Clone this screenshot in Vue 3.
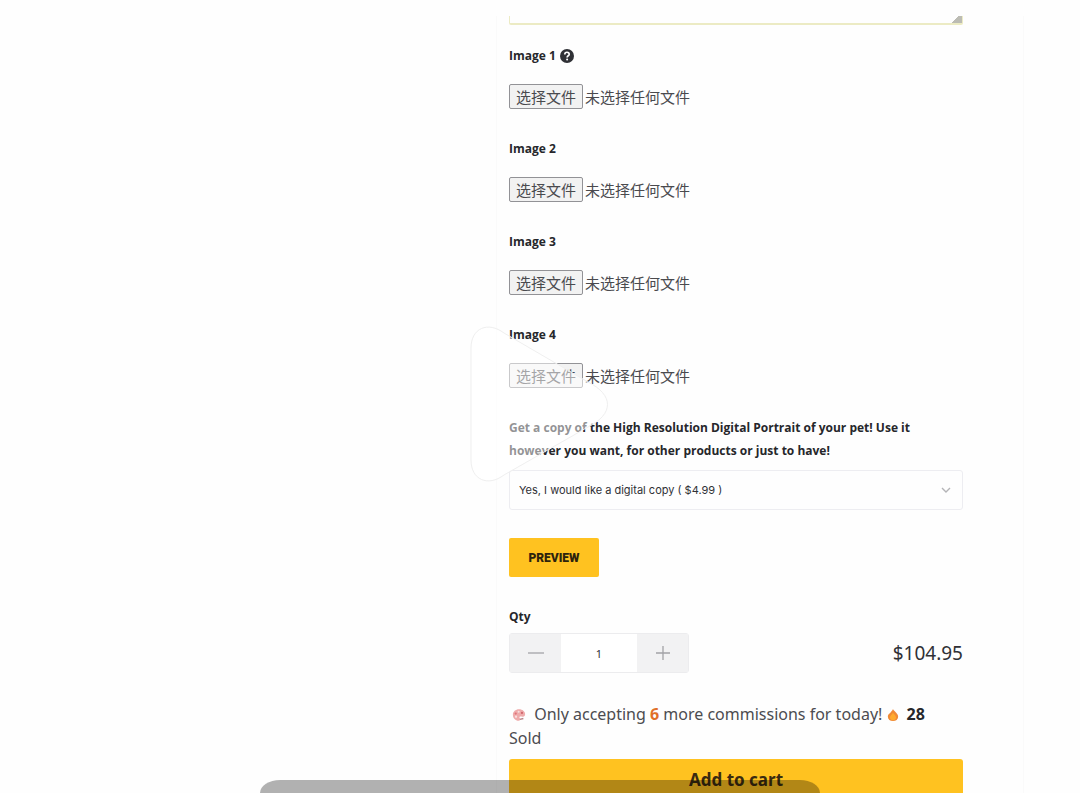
<script setup>
import { ref } from 'vue'

const slots = [
  { id: 'image-1', label: 'Image 1', help: true },
  { id: 'image-2', label: 'Image 2', help: false },
  { id: 'image-3', label: 'Image 3', help: false },
  { id: 'image-4', label: 'Image 4', help: false },
]
const files = ref({})
const quantity = ref(1)

function openPicker(id) {
  document.getElementById(id).click()
}
function onPick(id, event) {
  files.value[id] = event.target.files[0]?.name
}
</script>

<template>
  <main class="page">
    <form class="product" @submit.prevent>
      <textarea class="notes" aria-label="Notes"></textarea>

      <div v-for="slot in slots" :key="slot.id" class="upload">
        <div class="heading">
          <label class="label" :for="slot.id">{{ slot.label }}</label>
          <svg v-if="slot.help" class="help" viewBox="0 0 14 14" aria-hidden="true">
            <circle cx="7" cy="7" r="7" fill="#303136" />
            <path d="M4.8 5.4C4.8 2.5 9.2 2.6 9.2 5.2C9.2 6.8 7.1 6.7 7.1 8.5" fill="none" stroke="#fff" stroke-width="1.7" />
            <circle cx="7.1" cy="10.6" r="1" fill="#fff" />
          </svg>
        </div>
        <div class="picker">
          <input :id="slot.id" class="native" type="file" tabindex="-1" @change="onPick(slot.id, $event)" />
          <button class="choose" type="button" @click="openPicker(slot.id)">选择文件</button>
          <span>{{ files[slot.id] || '未选择任何文件' }}</span>
        </div>
      </div>

      <label class="label copy-label" for="copy">Get a copy of the High Resolution Digital Portrait of your pet! Use it however you want, for other products or just to have!</label>
      <div class="select-wrap">
        <select id="copy" class="select">
          <option>Yes, I would like a digital copy ( $4.99 )</option>
        </select>
        <svg class="chevron" viewBox="0 0 10 6" aria-hidden="true">
          <path d="M1 1L5 5L9 1" fill="none" stroke="#b4b4b7" stroke-width="1.4" />
        </svg>
      </div>

      <button class="preview" type="button">PREVIEW</button>

      <label class="label qty-label" for="qty">Qty</label>
      <div class="buy-row">
        <div class="stepper">
          <button class="step" type="button" aria-label="Decrease" @click="quantity = Math.max(1, quantity - 1)">
            <svg class="sign" viewBox="0 0 18 18"><path d="M1 9H17" stroke="#a3a3a7" stroke-width="1.3" /></svg>
          </button>
          <input id="qty" v-model.number="quantity" class="qty" type="text" inputmode="numeric" />
          <button class="step" type="button" aria-label="Increase" @click="quantity++">
            <svg class="sign" viewBox="0 0 18 18"><path d="M2 9H16M9 2V16" stroke="#a3a3a7" stroke-width="1.3" /></svg>
          </button>
        </div>
        <span class="price">$104.95</span>
      </div>

      <p class="stock">
        <svg class="emoji palette" viewBox="0 0 16 16" aria-hidden="true">
          <path d="M8 1.5C4 1.5 1 4.3 1 7.6C1 11.500 4 14.500 7.5 14.5C9.6 14.5 9.6 13 8.8 11.8C8 10.3 9 9.5 10.3 9.8C12.5 10.3 15 9.6 15 7C15 4 12 1.5 8 1.5Z" fill="#efabab" />
          <circle cx="4.2" cy="6.3" r="1.3" fill="#e0747a" />
          <circle cx="7.6" cy="4.3" r="1.2" fill="#f7dede" />
          <circle cx="11.4" cy="5.6" r="1.3" fill="#d0666d" />
          <circle cx="4.6" cy="10" r="1.3" fill="#f8dfdf" />
          <path d="M9 13L13 12" stroke="#b98488" stroke-width="1.5" />
        </svg>
        Only accepting <strong class="left">6</strong> more commissions for today!
        <svg class="emoji flame" viewBox="0 0 14 16" aria-hidden="true">
          <path d="M7 1C7.5 3.5 13 5.5 13 10C13 13.3 10.4 15 7 15C3.6 15 1 13.3 1 10C1 7 4 6 5 4C5.8 3.2 6.5 2.5 7 1Z" fill="#f08a35" />
          <path d="M7 5.5C7.5 7 10.5 8.5 10.5 11C10.5 13 9 14 7 14C5 14 3.5 13 3.5 11C3.5 9 6 7.5 7 5.5Z" fill="#ffaa2e" />
        </svg>
        <strong class="sold">28</strong> Sold
      </p>

      <button class="cart" type="submit">Add to cart</button>
    </form>

    <svg class="play" viewBox="0 0 140 160" aria-hidden="true">
      <path d="M1 24C1 4 18 -3 34 9L118 58C144 71 144 90 118 103L34 151C18 163 1 156 1 136Z" fill="#fff" fill-opacity="0.5" stroke="#efefef" />
    </svg>
    <div class="control-bar"></div>
  </main>
</template>

<style>
body {
  margin: 0;
  background: #fefefe;
}
</style>

<style scoped>
.page {
  position: relative;
  box-sizing: border-box;
  height: 100vh;
  overflow: hidden;
  display: grid;
  grid-template-columns: 496fr 528fr 56fr;
  padding-top: 16px;
  background: #fefefe;
  color: #303136;
  font-family: "Noto Sans", "Noto Sans CJK SC", sans-serif;
}
.product {
  grid-column: 2;
  display: flex;
  flex-direction: column;
  align-items: flex-start;
  padding: 0 60px 0 12px;
  border-left: 1px solid #fafafa;
  border-right: 1px solid #fafafa;
}
.notes {
  box-sizing: border-box;
  flex: none;
  width: 100%;
  height: 9px;
  padding: 0;
  border: 1px solid #ecebc4;
  border-top: 0;
  border-bottom-width: 2px;
  border-radius: 0 0 2px 2px;
  background: #fefefe;
  outline: 0;
  margin-bottom: 20px;
}
.notes::-webkit-resizer {
  background: linear-gradient(135deg, transparent 65%, #bcbcb4 65%);
}
button,
input,
select {
  font-family: inherit;
  color: inherit;
}
.upload {
  height: 93px;
}
.heading {
  display: flex;
  align-items: center;
  gap: 4px;
  height: 22px;
}
.label {
  font-family: "Open Sans", "Noto Sans", sans-serif;
  font-size: 12px;
  font-weight: 700;
  line-height: 22px;
  color: #26272b;
}
.help {
  width: 14px;
  height: 14px;
}
.picker {
  position: relative;
  display: flex;
  align-items: center;
  gap: 2px;
  margin-top: 17px;
  font-family: "Noto Sans CJK SC", sans-serif;
  font-size: 15px;
  line-height: 24px;
  color: #4a4a4e;
}
.native {
  position: absolute;
  width: 1px;
  height: 1px;
  opacity: 0;
  pointer-events: none;
}
.choose {
  box-sizing: border-box;
  height: 25px;
  padding: 0 6px;
  border: 1px solid #929296;
  border-radius: 2px;
  background: #f2f2f2;
  font-size: 15px;
  line-height: 22px;
}
.copy-label {
  margin-top: -1px;
  line-height: 23px;
}
.select-wrap {
  position: relative;
  width: 100%;
  margin-top: 8px;
}
.select {
  display: block;
  box-sizing: border-box;
  width: 100%;
  height: 40px;
  padding: 0 30px 0 9px;
  appearance: none;
  border: 1px solid #ededf1;
  border-radius: 3px;
  background: #fefefe;
  font-family: Inter, "Noto Sans", sans-serif;
  font-size: 11px;
}
.chevron {
  position: absolute;
  top: 17px;
  right: 12px;
  width: 10px;
  height: 6px;
}
.preview {
  width: 90px;
  height: 39px;
  margin-top: 28px;
  padding: 0;
  border: 0;
  border-radius: 2px;
  background: #ffc220;
  color: #2d230d;
  font-family: Roboto, sans-serif;
  font-size: 12px;
  font-weight: 900;
}
.qty-label {
  margin-top: 29px;
}
.buy-row {
  display: flex;
  justify-content: space-between;
  align-items: center;
  width: 100%;
  margin-top: 5px;
}
.stepper {
  box-sizing: border-box;
  display: flex;
  width: 180px;
  height: 40px;
  border: 1px solid #ececee;
  border-radius: 3px;
}
.step {
  display: flex;
  align-items: center;
  justify-content: center;
  width: 51px;
  padding: 0;
  border: 0;
  background: #f2f2f3;
}
.sign {
  width: 18px;
  height: 18px;
}
.qty {
  flex: 1;
  min-width: 0;
  padding: 0;
  border: 0;
  background: #fff;
  text-align: center;
  font-size: 11px;
}
.price {
  font-size: 19px;
  line-height: 24px;
}
.stock {
  max-width: 440px;
  margin: 29px 0 0;
  font-size: 16px;
  line-height: 24px;
  color: #4c4c50;
}
.emoji {
  height: 14px;
  vertical-align: -2px;
}
.palette {
  width: 14px;
  margin: 0 4px 0 3px;
}
.flame {
  width: 12px;
  margin: 0 8px 0 0;
}
.left {
  color: #e0702a;
}
.sold {
  color: #26272b;
}
.cart {
  flex: none;
  width: 100%;
  height: 40px;
  margin-top: 9px;
  padding: 0;
  border: 0;
  border-radius: 3px 3px 0 0;
  background: #ffc220;
  color: #3b2b10;
  font-size: 17px;
  font-weight: 700;
}
.play {
  position: absolute;
  top: 324px;
  left: calc(50% - 70px);
  width: 140px;
  height: 160px;
  pointer-events: none;
}
.control-bar {
  position: absolute;
  bottom: 0;
  left: 50%;
  width: 560px;
  height: 13px;
  transform: translateX(-50%);
  border-radius: 20px 20px 0 0 / 13px 13px 0 0;
  background: rgba(0, 0, 0, 0.3);
  pointer-events: none;
}
</style>
